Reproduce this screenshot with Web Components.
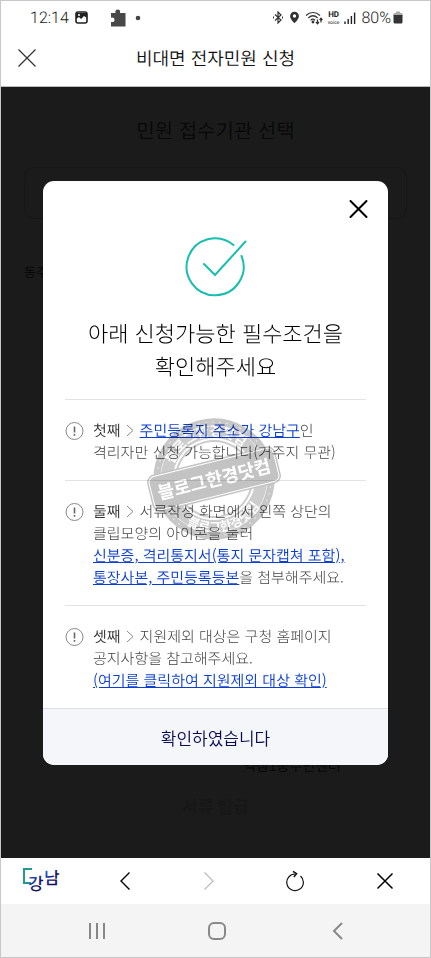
<!DOCTYPE html>
<html lang="ko">
<head>
<meta charset="utf-8">
<meta name="viewport" content="width=device-width, initial-scale=1">
<title>비대면 전자민원 신청</title>
<style>
    body {
        margin: 0;
        font-family: "Noto Sans CJK KR", sans-serif;
        text-rendering: geometricPrecision;
        color: #111;
        background: #fff;
    }
</style>
</head>
<body>
<app-screen>
    <status-bar slot="top" time="12:14" battery="80%"></status-bar>
    <page-header slot="top">비대면 전자민원 신청</page-header>
    <office-form heading="민원 접수기관 선택" label="동주민센터" office="역삼1동주민센터" action="서류 발급"></office-form>
    <notice-dialog slot="dialog" confirm="확인하였습니다">
        <span slot="title">아래 신청가능한 필수조건을<br>확인해주세요</span>
        <notice-item order="첫째"><a href="#address">주민등록지 주소가 강남구</a>인<br>격리자만 신청 가능합니다(거주지 무관)</notice-item>
        <notice-item order="둘째">서류작성 화면에서 왼쪽 상단의<br>클립모양의 아이콘을 눌러<br><a href="#documents">신분증, 격리통지서(통지 문자캡쳐 포함),<br>통장사본, 주민등록등본</a>을 첨부해주세요.</notice-item>
        <notice-item order="셋째">지원제외 대상은 구청 홈페이지<br>공지사항을 참고해주세요.<br><a href="#excluded">(여기를 클릭하여 지원제외 대상 확인)</a></notice-item>
        <blog-stamp slot="stamp"></blog-stamp>
    </notice-dialog>
    <browser-toolbar slot="bottom"></browser-toolbar>
    <system-nav slot="bottom"></system-nav>
</app-screen>

<script>
class AppScreen extends HTMLElement {
    connectedCallback() {
        this.attachShadow({ mode: 'open' });
        this.shadowRoot.innerHTML = `
            <style>
                :host {
                    display: flex;
                    flex-direction: column;
                    box-sizing: border-box;
                    min-height: 100vh;
                    border: 1px solid #c8c8c8;
                }
                main {
                    flex: 1;
                    display: grid;
                    background: #1b1b1b;
                }
                main > * {
                    grid-area: 1 / 1;
                    min-width: 0;
                }
                .layer {
                    display: grid;
                    align-content: start;
                    padding: 94px 42px 92px;
                    z-index: 1;
                }
            </style>
            <slot name="top"></slot>
            <main>
                <div><slot></slot></div>
                <div class="layer"><slot name="dialog"></slot></div>
            </main>
            <slot name="bottom"></slot>
        `;
    }
}

class StatusBar extends HTMLElement {
    connectedCallback() {
        this.attachShadow({ mode: 'open' });
        this.shadowRoot.innerHTML = `
            <style>
                :host {
                    display: flex;
                    align-items: center;
                    justify-content: space-between;
                    height: 33px;
                    padding: 0 27px 0 29px;
                    font: 300 16px Roboto, sans-serif;
                    color: #222;
                }
                .group {
                    display: flex;
                    align-items: center;
                }
                .left { gap: 6px; }
                .right { gap: 5px; }
                .puzzle { margin-left: 16px; }
                .charge {
                    display: flex;
                    align-items: center;
                    gap: 2px;
                }
                .hd {
                    display: grid;
                    justify-items: center;
                    font-size: 8px;
                    font-weight: 700;
                    line-height: 10px;
                }
                .hd small {
                    font-size: 5px;
                    font-weight: 400;
                    line-height: 6px;
                }
                svg { display: block; }
            </style>
            <div class="group left">
                <span>${this.getAttribute('time')}</span>
                <svg width="13" height="13" viewBox="0 0 13 13">
                    <rect x="1" y="1" width="11" height="11" rx="2" fill="none" stroke="#222" stroke-width="1.6"/>
                    <path d="M1 2h11v5L9 5 6 8 4 6 1 8z" fill="#222"/>
                    <circle cx="4" cy="4" r="1" fill="#fff"/>
                </svg>
                <svg class="puzzle" width="16" height="18" viewBox="0 0 16 18">
                    <path d="M1 4h4.500C5 1.500 6 .5 7.800.5S10.500 1.500 10 4h5.500v13.500H1v-4.500c2.500.5 3.500-.7 3.500-2.200S3.500 8.200 1 8.700z" fill="#484848"/>
                </svg>
                <svg width="15" height="6" viewBox="0 0 15 6"><circle cx="6" cy="3" r="2.300" fill="#444"/></svg>
            </div>
            <div class="group right">
                <svg width="12" height="13" viewBox="0 0 12 13" fill="none" stroke="#333" stroke-width="1.200">
                    <path d="M3 3.500l6 5.500-3 3V1l3 3-6 5.500"/><path d="M1 6.500h1M10 6.500h1" stroke-width="1.800"/>
                </svg>
                <svg width="11" height="13" viewBox="0 0 11 13">
                    <path d="M5.500.8a4.400 4.400 0 0 1 4.400 4.400c0 3-4.400 7-4.400 7s-4.400-4-4.400-7A4.400 4.400 0 0 1 5.500.8z" fill="#333"/>
                    <circle cx="5.500" cy="5" r="1.700" fill="#fff"/>
                </svg>
                <svg width="18" height="14" viewBox="0 0 18 14" fill="none" stroke="#333" stroke-width="1.200">
                    <path d="M1 4.500c4-4 10-4 14 0M3.300 7c3-2.800 6.500-2.800 9.300 0M5.600 9.300c1.500-1.500 3-1.500 4.500 0"/>
                    <circle cx="8" cy="11" r=".8" fill="#333"/>
                    <path d="M12.500 8.500v4M11 11l1.500 1.800L14 11M16 11.500V7.300M14.600 9L16 7.300 17.400 9"/>
                </svg>
                <span class="hd">HD<small>voice</small></span>
                <svg width="12" height="12" viewBox="0 0 12 12" stroke="#222" stroke-width="1.400">
                    <path d="M1 9.500V12M4.200 7V12M7.400 4V12M10.600.5V12"/>
                </svg>
                <span class="charge">${this.getAttribute('battery')}
                    <svg width="10" height="13" viewBox="0 0 10 13">
                        <path d="M3 .5h4v1.500h1.500q1 0 1 1V5H.5V3q0-1 1-1H3z" fill="#aaa"/>
                        <path d="M.5 4h9v7q0 1.500-1.500 1.500H2Q.5 12.500.5 11z" fill="#333"/>
                    </svg>
                </span>
            </div>
        `;
    }
}

class PageHeader extends HTMLElement {
    connectedCallback() {
        this.attachShadow({ mode: 'open' });
        this.shadowRoot.innerHTML = `
            <style>
                :host {
                    display: grid;
                    grid-template-columns: 20px 1fr 20px;
                    align-items: center;
                    height: 48px;
                    padding: 0 16px 4px;
                    border-bottom: 1px solid #bbb;
                }
                button {
                    padding: 0;
                    border: 0;
                    background: none;
                }
                svg { display: block; }
                h1 {
                    margin: 0;
                    font-size: 18px;
                    font-weight: 350;
                    line-height: 24px;
                    text-align: center;
                }
            </style>
            <button type="button" aria-label="닫기">
                <svg width="20" height="20" viewBox="0 0 20 20" stroke="#333" stroke-width="1.200">
                    <path d="M1.500 1.500l17 17M18.500 1.500l-17 17"/>
                </svg>
            </button>
            <h1><slot></slot></h1>
        `;
    }
}

class OfficeForm extends HTMLElement {
    connectedCallback() {
        this.attachShadow({ mode: 'open' });
        this.shadowRoot.innerHTML = `
            <style>
                :host {
                    display: block;
                    padding: 28px 23px 0;
                    color: #080808;
                }
                h2 {
                    margin: 0 0 22px;
                    font-size: 20px;
                    font-weight: 350;
                    line-height: 30px;
                    text-align: center;
                }
                .box {
                    height: 50px;
                    border: 1px solid #161616;
                    border-radius: 10px;
                }
                .label {
                    margin-top: 43px;
                    font-size: 13px;
                    line-height: 20px;
                }
                .office {
                    margin: 474px 66px 0 0;
                    font-size: 14px;
                    line-height: 20px;
                    text-align: right;
                }
                .action {
                    margin-top: 18px;
                    font-size: 17px;
                    font-weight: 700;
                    line-height: 24px;
                    text-align: center;
                    color: #171717;
                }
            </style>
            <h2>${this.getAttribute('heading')}</h2>
            <div class="box"></div>
            <div class="label">${this.getAttribute('label')}</div>
            <div class="office">${this.getAttribute('office')}</div>
            <div class="action">${this.getAttribute('action')}</div>
        `;
    }
}

class NoticeDialog extends HTMLElement {
    connectedCallback() {
        this.attachShadow({ mode: 'open' });
        this.shadowRoot.innerHTML = `
            <style>
                :host {
                    display: block;
                    position: relative;
                    overflow: hidden;
                    border-radius: 11px;
                    background: #fff;
                }
                .body {
                    display: flex;
                    flex-direction: column;
                    padding: 17px 22px 0;
                }
                button {
                    border: 0;
                    padding: 0;
                    background: none;
                    font: inherit;
                }
                svg { display: block; }
                .close { align-self: flex-end; margin-right: -4px; }
                .check { align-self: center; margin: 16px 0 19px; }
                h2 {
                    margin: 0 0 16px;
                    font-size: 22px;
                    font-weight: 300;
                    line-height: 33px;
                    text-align: center;
                    color: #000;
                }
                .confirm {
                    display: block;
                    width: 100%;
                    height: 57px;
                    border-top: 1px solid #dcdee2;
                    background: #f4f6fa;
                    font-size: 17px;
                    font-weight: 350;
                    color: #0b0b52;
                }
                /* watermark lies over the first two notices */
                .stamp {
                    position: absolute;
                    top: 235px;
                    left: 50%;
                    margin-left: -70px;
                    pointer-events: none;
                    mix-blend-mode: multiply;
                }
            </style>
            <div class="body">
                <button class="close" type="button" aria-label="팝업 닫기">
                    <svg width="22" height="22" viewBox="0 0 22 22" stroke="#000" stroke-width="2" stroke-linecap="round">
                        <path d="M2.500 3l16 16M18.500 3l-16 16"/>
                    </svg>
                </button>
                <svg class="check" width="62" height="62" viewBox="0 0 62 62" fill="none" stroke="#18bfb0" stroke-width="2" stroke-linecap="round">
                    <path d="M48.500 9A28.500 28.500 0 1 0 56.500 20"/>
                    <path d="M19 28l11 11L60.500 5.500"/>
                </svg>
                <h2><slot name="title"></slot></h2>
                <slot></slot>
            </div>
            <button class="confirm" type="button">${this.getAttribute('confirm')}</button>
            <div class="stamp"><slot name="stamp"></slot></div>
        `;
    }
}

class NoticeItem extends HTMLElement {
    connectedCallback() {
        this.attachShadow({ mode: 'open' });
        this.shadowRoot.innerHTML = `
            <style>
                :host {
                    display: grid;
                    grid-template-columns: 20px 1fr;
                    gap: 8px;
                    padding: 20px 0 16px;
                    border-top: 1px solid #e2e2e2;
                    font-size: 15px;
                    font-weight: 300;
                    line-height: 22px;
                    white-space: nowrap;
                    color: #444;
                }
                strong {
                    font-weight: 350;
                    color: #333;
                }
                .mark { margin-top: 1px; }
                .arrow { margin: 0 5px 0 4px; vertical-align: -1px; }
                ::slotted(a) {
                    font-weight: 350;
                    color: #0b3fd0;
                    text-decoration: underline;
                }
            </style>
            <svg class="mark" width="20" height="20" viewBox="0 0 20 20" fill="none" stroke="#888">
                <circle cx="9.500" cy="10" r="8.500"/>
                <path d="M9.500 5.500v6M9.500 13v1.800" stroke="#666" stroke-width="1.600"/>
            </svg>
            <div><strong>${this.getAttribute('order')}</strong><svg class="arrow" width="10" height="13" viewBox="0 0 10 13" fill="none" stroke="#888"><path d="M2 1l6 5.500L2 12"/></svg><slot></slot></div>
        `;
    }
}

class BlogStamp extends HTMLElement {
    connectedCallback() {
        this.attachShadow({ mode: 'open' });
        this.shadowRoot.innerHTML = `
            <style>
                :host { display: block; opacity: 0.6; }
                svg { display: block; }
                text {
                    font-family: "Noto Sans CJK KR", sans-serif;
                    font-weight: 700;
                }
            </style>
            <svg width="140" height="126" viewBox="0 0 140 126">
                <defs>
                    <path id="upper" d="M25 63a43 43 0 0 1 86 0"/>
                    <path id="lower" d="M15 63a53 53 0 0 0 106 0"/>
                </defs>
                <g transform="rotate(-14 68 63)">
                    <circle cx="68" cy="63" r="57" fill="none" stroke="#a2a2a2" stroke-width="7"/>
                    <circle cx="68" cy="63" r="57" fill="none" stroke="#ddd" stroke-dasharray="2 5"/>
                    <circle cx="68" cy="63" r="47" fill="none" stroke="#aaa" stroke-width="12"/>
                    <circle cx="68" cy="63" r="38" fill="none" stroke="#aaa" stroke-width="2"/>
                    <text font-size="13" fill="#fff"><textPath href="#upper" startOffset="50%" text-anchor="middle">블로그한경닷컴</textPath></text>
                    <text font-size="13" fill="#fff"><textPath href="#lower" startOffset="50%" text-anchor="middle">블로그한경닷컴</textPath></text>
                    <rect x="2" y="44" width="132" height="38" rx="8" fill="#9c9c9c"/>
                    <rect x="4" y="46" width="128" height="34" rx="6" fill="none" stroke="#fff"/>
                    <text x="68" y="70" font-size="18" fill="#fff" text-anchor="middle">블로그한경닷컴</text>
                </g>
            </svg>
        `;
    }
}

class BrowserToolbar extends HTMLElement {
    connectedCallback() {
        this.attachShadow({ mode: 'open' });
        this.shadowRoot.innerHTML = `
            <style>
                :host {
                    display: grid;
                    grid-template-columns: 82fr 84fr 84fr 88fr 91fr;
                    place-items: center;
                    height: 46px;
                    background: #fff;
                }
                a, button {
                    padding: 0;
                    border: 0;
                    background: none;
                }
                svg { display: block; fill: none; }
            </style>
            <a href="#home" aria-label="더강남">
                <svg width="42" height="34" viewBox="0 0 42 34">
                    <defs>
                        <linearGradient id="ink" x1="0" y1="0" x2="1" y2="1">
                            <stop offset="0.2" stop-color="#1d5fd6"/>
                            <stop offset="0.6" stop-color="#14145e"/>
                        </linearGradient>
                    </defs>
                    <path d="M11 5H3v14h7" stroke="#1f9c8c" stroke-width="2"/>
                    <g font-family="Noto Sans CJK KR, sans-serif" font-size="17" font-weight="500" fill="url(#ink)">
                        <text x="7" y="26">강</text>
                        <text x="23" y="20">남</text>
                    </g>
                </svg>
            </a>
            <button type="button" aria-label="이전">
                <svg width="12" height="20" viewBox="0 0 12 20" stroke="#000" stroke-width="1.400"><path d="M10.500 1.500L2 10l8.500 8.500"/></svg>
            </button>
            <button type="button" aria-label="다음" disabled>
                <svg width="12" height="20" viewBox="0 0 12 20" stroke="#bbb" stroke-width="1.200"><path d="M1.500 1.500L10 10l-8.500 8.500"/></svg>
            </button>
            <button type="button" aria-label="새로고침">
                <svg width="20" height="22" viewBox="0 0 20 22" stroke="#111" stroke-width="1.200">
                    <path d="M15.500 6A8.300 8.300 0 1 1 10.500 4"/><path d="M8 1.300l3.600 2.400-2.800 3.300" stroke-width="1.500"/>
                </svg>
            </button>
            <button type="button" aria-label="닫기">
                <svg width="18" height="18" viewBox="0 0 18 18" stroke="#000" stroke-width="1.500"><path d="M1.500 1.500l15 15M16.500 1.500l-15 15"/></svg>
            </button>
        `;
    }
}

class SystemNav extends HTMLElement {
    connectedCallback() {
        this.attachShadow({ mode: 'open' });
        this.shadowRoot.innerHTML = `
            <style>
                :host {
                    display: grid;
                    grid-template-columns: repeat(3, 1fr);
                    place-items: center;
                    height: 53px;
                    padding: 0 32px 0 36px;
                    background: #f4f4f4;
                }
                button {
                    padding: 0;
                    border: 0;
                    background: none;
                }
                svg { display: block; fill: none; stroke: #888; stroke-width: 2; }
            </style>
            <button type="button" aria-label="최근 앱">
                <svg width="20" height="20" viewBox="0 0 20 20"><path d="M3 2v16M10 2v16M17 2v16"/></svg>
            </button>
            <button type="button" aria-label="홈">
                <svg width="20" height="20" viewBox="0 0 20 20"><rect x="2" y="2" width="16" height="16" rx="5"/></svg>
            </button>
            <button type="button" aria-label="뒤로">
                <svg width="12" height="20" viewBox="0 0 12 20"><path d="M10 2l-8 8 8 8"/></svg>
            </button>
        `;
    }
}

customElements.define('app-screen', AppScreen);
customElements.define('status-bar', StatusBar);
customElements.define('page-header', PageHeader);
customElements.define('office-form', OfficeForm);
customElements.define('notice-dialog', NoticeDialog);
customElements.define('notice-item', NoticeItem);
customElements.define('blog-stamp', BlogStamp);
customElements.define('browser-toolbar', BrowserToolbar);
customElements.define('system-nav', SystemNav);
</script>
</body>
</html>
